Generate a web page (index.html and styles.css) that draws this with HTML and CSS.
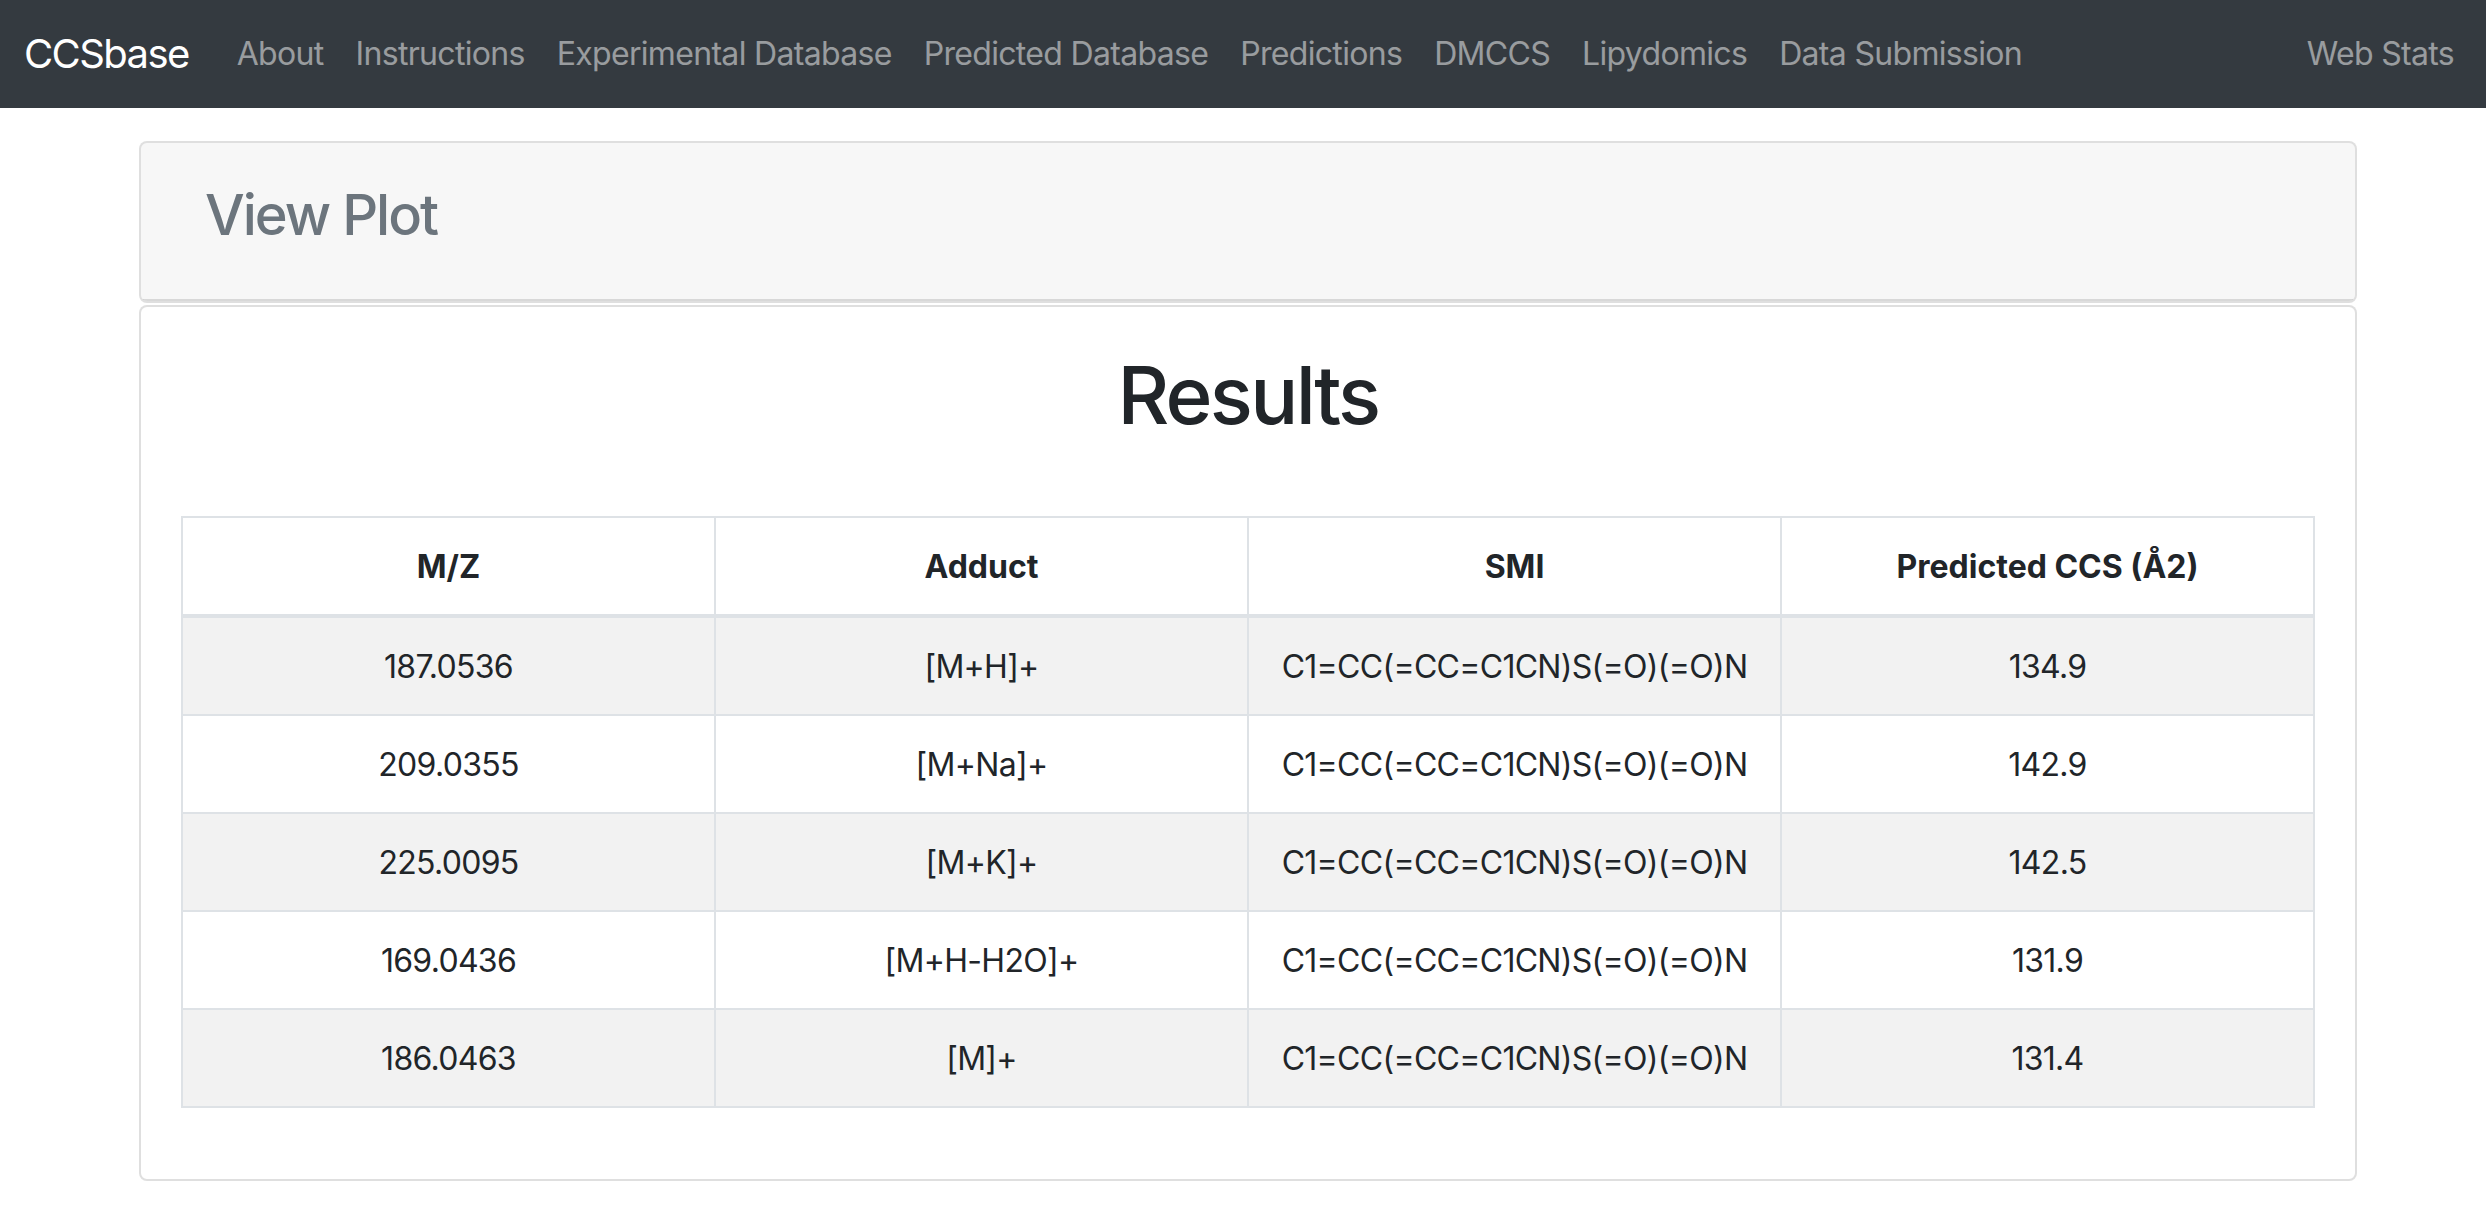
FILE: index.html
```html
<!DOCTYPE html>
<html lang="en">
<head>
<meta charset="utf-8">
<title>CCSbase - Results</title>
<link rel="stylesheet" href="styles.css">
</head>
<body>
<nav class="navbar">
  <a class="brand" href="#">CCSbase</a>
  <ul class="nav-links">
    <li><a href="#">About</a></li>
    <li><a href="#">Instructions</a></li>
    <li><a href="#">Experimental Database</a></li>
    <li><a href="#">Predicted Database</a></li>
    <li><a href="#">Predictions</a></li>
    <li><a href="#">DMCCS</a></li>
    <li><a href="#">Lipydomics</a></li>
    <li><a href="#">Data Submission</a></li>
  </ul>
  <ul class="nav-links nav-right">
    <li><a href="#">Web Stats</a></li>
  </ul>
</nav>

<div class="page">
  <div class="container">
    <div class="card">
      <div class="card-header">
        <h3 class="muted">View Plot</h3>
      </div>
    </div>
    <div class="card card-results">
      <div class="card-body">
        <h1 class="results-title">Results</h1>
        <table class="table">
          <thead>
            <tr><th>M/Z</th><th>Adduct</th><th>SMI</th><th>Predicted CCS (Å2)</th></tr>
          </thead>
          <tbody>
            <tr><td>187.0536</td><td>[M+H]+</td><td>C1=CC(=CC=C1CN)S(=O)(=O)N</td><td>134.9</td></tr>
            <tr><td>209.0355</td><td>[M+Na]+</td><td>C1=CC(=CC=C1CN)S(=O)(=O)N</td><td>142.9</td></tr>
            <tr><td>225.0095</td><td>[M+K]+</td><td>C1=CC(=CC=C1CN)S(=O)(=O)N</td><td>142.5</td></tr>
            <tr><td>169.0436</td><td>[M+H-H2O]+</td><td>C1=CC(=CC=C1CN)S(=O)(=O)N</td><td>131.9</td></tr>
            <tr><td>186.0463</td><td>[M]+</td><td>C1=CC(=CC=C1CN)S(=O)(=O)N</td><td>131.4</td></tr>
          </tbody>
        </table>
      </div>
    </div>
  </div>
</div>
</body>
</html>
```
FILE: styles.css
```css
* { box-sizing: border-box; }

html, body {
  margin: 0;
  padding: 0;
  background: #ffffff;
}

body {
  font-family: "Inter", "Liberation Sans", "Noto Sans", sans-serif;
  color: #212529;
  font-size: 32px;
  line-height: 1.5;
}

a { text-decoration: none; }

/* ---------- navbar ---------- */
.navbar {
  display: flex;
  align-items: center;
  height: 108px;
  padding: 0 16px 0 24px;
  background: #343a40;
}

.brand {
  color: #ffffff;
  font-size: 40px;
  line-height: 60px;
  margin-right: 32px;
  letter-spacing: -1.6px;
}

.nav-links {
  display: flex;
  list-style: none;
  margin: 0;
  padding: 0;
}

.nav-links a {
  display: block;
  padding: 16px 16px;
  color: rgba(255, 255, 255, 0.5);
  font-size: 32px;
  line-height: 48px;
  letter-spacing: -0.68px;
}

.nav-right {
  margin-left: auto;
}

/* ---------- layout ---------- */
.page {
  padding-left: 10px;
}

.container {
  width: 2218px;
  margin: 33px auto 0;
}

/* ---------- cards ---------- */
.card {
  background: #ffffff;
  border: 2px solid rgba(0, 0, 0, 0.125);
  border-radius: 8px;
  overflow: hidden;
}

.card-header {
  background: rgba(0, 0, 0, 0.03);
  border-bottom: 2px solid rgba(0, 0, 0, 0.125);
  padding: 39px 64px 34px;
}

.card-header h3 {
  margin: 0 0 16px;
  font-size: 56px;
  line-height: 1.2;
  font-weight: 500;
  letter-spacing: -2px;
}

.muted { color: #6c757d; }

.card-results {
  margin-top: 2px;
}

.card-body {
  padding: 40px;
}

.results-title {
  margin: 0 0 73px;
  text-align: center;
  font-size: 80px;
  line-height: 1.2;
  font-weight: 500;
  letter-spacing: -2.7px;
}

/* ---------- table ---------- */
.table {
  width: 100%;
  table-layout: fixed;
  border-collapse: collapse;
  border: 2px solid #dee2e6;
  margin-bottom: 31px;
  color: #212529;
}

.table th,
.table td {
  border: 2px solid #dee2e6;
  padding: 25px 24px 23px;
  text-align: center;
  font-size: 32px;
  line-height: 48px;
  letter-spacing: -0.7px;
}

.table thead th {
  border-bottom-width: 4px;
  font-weight: 700;
  letter-spacing: 0;
}

.table td { font-weight: 400; }

.table tbody tr:nth-child(odd) {
  background: rgba(0, 0, 0, 0.05);
}
```
